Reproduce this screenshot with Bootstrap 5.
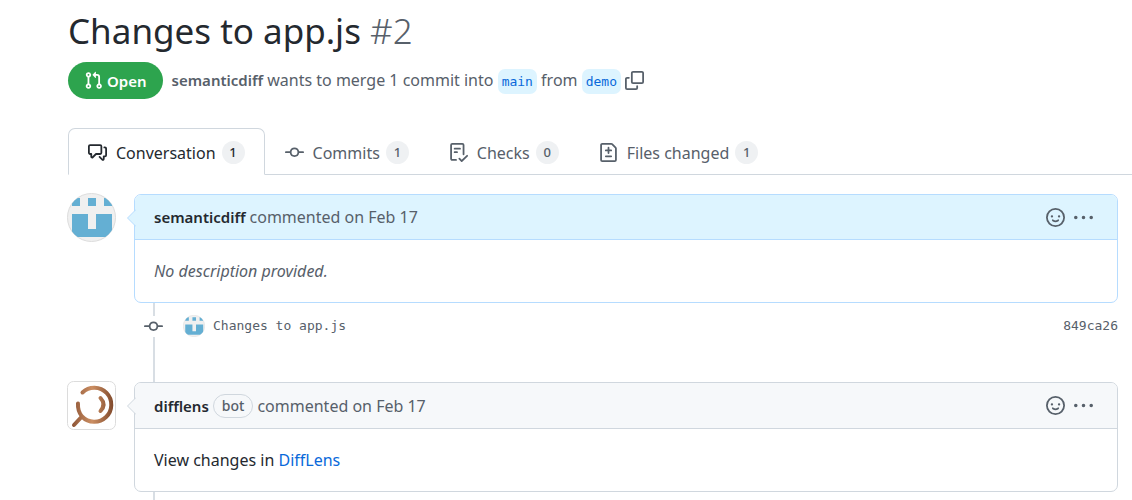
<!DOCTYPE html>
<html lang="en">
<head>
<meta charset="utf-8">
<meta name="viewport" content="width=device-width, initial-scale=1">
<title>Changes to app.js #2</title>
<link rel="stylesheet" href="https://cdn.jsdelivr.net/npm/bootstrap@5.3.0/dist/css/bootstrap.min.css">
<style>
  :root { --ink: #24292f; --muted: #57606a; --line: #d0d7de; --accent: #0969da; --sky: #ddf4ff; --sky-line: #b6dcff; }
  body { font: 16px/24px "Noto Sans", "Open Sans", sans-serif; color: var(--ink); overflow-x: hidden; }
  .page { padding-left: 68px; }
  .muted { color: var(--muted); }
  .semi { font-weight: 600; font-size: 15px; }
  .mono { font-family: "DejaVu Sans Mono", monospace; font-size: 13px; }
  .oct { width: 19px; height: 19px; fill: currentColor; flex: none; display: block; }
  .pr-title { font-size: 35px; line-height: 44px; font-weight: 400; padding-top: 9px; margin-bottom: 9px; }
  .pr-title span { font-weight: 300; color: var(--muted); }
  .state { background: #2da44e; color: #fff; height: 37px; padding: 0 16px; gap: 4px; margin-right: 9px; }
  .branch { background: var(--sky); color: var(--accent); border-radius: 7px; padding: 0 4px; line-height: 25px; display: inline-block; }
  .bare { border: 0; background: none; padding: 0; color: var(--muted); }
  .nav-tabs.pr-tabs { margin-top: 29px; border-color: var(--line); --bs-nav-tabs-border-radius: 7px; }
  .pr-tabs .nav-link { color: var(--muted); padding: 12px 19px 10px; gap: 9px; height: 47px; }
  .pr-tabs .nav-link.active { color: var(--ink); border-color: var(--line) var(--line) #fff; }
  .count { background: #eff1f3; min-width: 23px; height: 23px; line-height: 23px; font-size: 13px; font-weight: 500; text-align: center; border-radius: 12px; margin-left: -3px; }
  .timeline { position: relative; padding: 19px 14px 8px 0; }
  .timeline::before { content: ""; position: absolute; left: 85px; top: 40px; bottom: 0; width: 2px; background: #d8dee4; }
  .entry { gap: 18px; position: relative; }
  .face { width: 49px; height: 49px; flex: none; display: block; margin: -1px 0 0 -1px; }
  .bubble { --edge: var(--line); --fill: #f6f8fa; border: 1px solid var(--edge); border-radius: 7px; background: #fff; position: relative; min-width: 0; }
  .bubble.own { --edge: var(--sky-line); --fill: var(--sky); }
  .bubble-head { background: var(--fill); border-bottom: 1px solid var(--edge); border-radius: 6px 6px 0 0; padding: 0 19px; min-height: 45px; gap: 4px; }
  .bubble-head.tall { min-height: 46px; }
  .bubble-head .actions { gap: 9px; padding-right: 5px; }
  .bubble-text { padding: 19px; }
  .notch { position: absolute; left: -8px; top: 14px; width: 9px; height: 18px; fill: var(--fill); stroke: var(--edge); }
  .bot { border: 1px solid var(--line); border-radius: 12px; padding: 0 8px; line-height: 22px; font-size: 14px; font-weight: 500; }
  .push { padding: 11px 0 44px 76px; position: relative; }
  .push-dot { background: #fff; padding: 1px 0; margin-right: 20px; }
  a.plain { color: inherit; text-decoration: none; }
  a.author { color: var(--ink); }
  a.blue { color: var(--accent); text-decoration: none; }
</style>
</head>
<body>
<svg class="position-absolute" width="0" height="0" xmlns="http://www.w3.org/2000/svg" aria-hidden="true">
  <defs>
    <clipPath id="disc"><circle cx="24.500" cy="24.500" r="24"/></clipPath>
    <linearGradient id="copper" gradientUnits="userSpaceOnUse" x1="4" x2="46" y1="0" y2="0"><stop offset="0" stop-color="#8a5234"/><stop offset=".5" stop-color="#cc8f63"/><stop offset="1" stop-color="#824b2d"/></linearGradient>
  </defs>
  <symbol id="identicon" viewBox="0 0 49 49">
    <circle cx="24.500" cy="24.500" r="24" fill="#f0f0f0" stroke="#dcdcdc"/>
    <path clip-path="url(#disc)" fill="#64afd3" d="M5 5h8v8H5zM21 5h8v8h-8zM37 5h8v8h-8zM5 21h16v15h8V21h16v23H5z"/>
  </symbol>
  <symbol id="commit" viewBox="0 0 16 16"><path fill-rule="evenodd" d="M10.5 7.750a2.500 2.500 0 11-5 0 2.500 2.500 0 015 0zm1.430.750a4.002 4.002 0 01-7.860 0H.75a.75.75 0 110-1.500h3.320a4.001 4.001 0 017.860 0h3.320a.75.75 0 110 1.500h-3.320z"/></symbol>
  <symbol id="smiley" viewBox="0 0 16 16"><path fill-rule="evenodd" d="M1.5 8a6.5 6.5 0 1113 0 6.5 6.5 0 01-13 0zM8 0a8 8 0 100 16A8 8 0 008 0zM5 8a1 1 0 100-2 1 1 0 000 2zm7-1a1 1 0 11-2 0 1 1 0 012 0zM5.320 9.636a.75.75 0 011.038.175l.007.009c.103.118.22.222.35.31.264.178.683.37 1.285.37.602 0 1.020-.192 1.285-.371.13-.088.247-.192.35-.31l.007-.008a.75.75 0 111.222.87c-.2.260-.45.490-.732.680-.474.322-1.180.630-2.132.630-.946 0-1.652-.308-2.126-.63a3.320 3.320 0 01-.737-.685.75.75 0 01.183-1.050z"/></symbol>
  <symbol id="dots" viewBox="0 0 16 16"><path d="M8 9.500a1.500 1.500 0 100-3 1.500 1.500 0 000 3zM1.500 9.500a1.500 1.500 0 100-3 1.500 1.500 0 000 3zm13 0a1.500 1.500 0 100-3 1.500 1.500 0 000 3z"/></symbol>
</svg>

<main class="page">
  <h1 class="pr-title">Changes to app.js <span>#2</span></h1>

  <div class="d-flex flex-wrap align-items-center muted">
    <span class="state d-inline-flex align-items-center rounded-pill semi">
      <svg class="oct" viewBox="0 0 16 16" aria-hidden="true"><path fill-rule="evenodd" d="M7.177 3.073L9.573.677A.25.25 0 0110 .854v4.792a.25.25 0 01-.427.177L7.177 3.427a.25.25 0 010-.354zM3.750 2.500a.75.75 0 100 1.500.75.75 0 000-1.500zm-2.250.750a2.250 2.250 0 113 2.122v5.256a2.251 2.251 0 11-1.500 0V5.372A2.250 2.250 0 011.500 3.250zM11 2.500h-1V4h1a1 1 0 011 1v5.628a2.251 2.251 0 101.500 0V5A2.500 2.500 0 0011 2.500zm1 10.250a.75.75 0 111.500 0 .75.75 0 01-1.500 0zM3.750 12a.75.75 0 100 1.500.75.75 0 000-1.500z"/></svg>
      Open
    </span>
    <span><a class="plain semi" href="#">semanticdiff</a> wants to merge 1 commit into <a class="branch mono text-decoration-none" href="#">main</a> from <a class="branch mono text-decoration-none" href="#">demo</a></span>
    <button class="bare ms-1" type="button" aria-label="Copy branch name">
      <svg class="oct" viewBox="0 0 16 16"><path fill-rule="evenodd" d="M0 6.750C0 5.784.784 5 1.750 5h1.500a.75.75 0 010 1.500h-1.500a.25.25 0 00-.25.25v7.500c0 .138.112.25.25.25h7.500a.25.25 0 00.25-.25v-1.500a.75.75 0 011.500 0v1.500A1.750 1.750 0 019.250 16h-7.500A1.750 1.750 0 010 14.250v-7.500zM5 1.750C5 .784 5.784 0 6.750 0h7.500C15.216 0 16 .784 16 1.750v7.500A1.750 1.750 0 0114.250 11h-7.500A1.750 1.750 0 015 9.250v-7.500zm1.750-.25a.25.25 0 00-.25.25v7.500c0 .138.112.25.25.25h7.500a.25.25 0 00.25-.25v-7.500a.25.25 0 00-.25-.25h-7.500z"/></svg>
    </button>
  </div>

  <ul class="nav nav-tabs pr-tabs">
    <li class="nav-item"><a class="nav-link active d-flex align-items-center" aria-current="page" href="#">
      <svg class="oct" viewBox="0 0 16 16" aria-hidden="true"><path fill-rule="evenodd" d="M1.500 2.750a.25.25 0 01.25-.25h8.500a.25.25 0 01.25.25v5.500a.25.25 0 01-.25.25h-3.500a.75.75 0 00-.53.22L3.500 11.440V9.250a.75.75 0 00-.75-.75h-1a.25.25 0 01-.25-.25v-5.500zM1.750 1A1.750 1.750 0 000 2.750v5.500C0 9.216.784 10 1.750 10H2v1.543a1.457 1.457 0 002.487 1.030L7.061 10h3.189A1.750 1.750 0 0012 8.250v-5.500A1.750 1.750 0 0010.250 1h-8.500zM14.500 4.750a.25.25 0 00-.25-.25h-.5a.75.75 0 110-1.500h.5c.966 0 1.750.784 1.750 1.750v5.500A1.750 1.750 0 0114.250 12H14v1.543a1.457 1.457 0 01-2.487 1.030L9.220 12.280a.75.75 0 111.060-1.060l2.220 2.220v-2.190a.75.75 0 01.75-.75h1a.25.25 0 00.25-.25v-5.500z"/></svg>
      Conversation <span class="count">1</span></a></li>
    <li class="nav-item"><a class="nav-link d-flex align-items-center" href="#">
      <svg class="oct" aria-hidden="true"><use href="#commit"/></svg>
      Commits <span class="count">1</span></a></li>
    <li class="nav-item"><a class="nav-link d-flex align-items-center" href="#">
      <svg class="oct" viewBox="0 0 16 16" aria-hidden="true"><path fill-rule="evenodd" d="M2.500 1.750a.25.25 0 01.25-.25h8.500a.25.25 0 01.25.25v7.736a.75.75 0 101.500 0V1.750A1.750 1.750 0 0011.250 0h-8.500A1.750 1.750 0 001 1.750v11.500c0 .966.784 1.750 1.750 1.750h3.170a.75.75 0 000-1.500H2.750a.25.25 0 01-.25-.25V1.750zM4.750 4a.75.75 0 000 1.500h4.500a.75.75 0 000-1.500h-4.500zM4 7.750A.75.75 0 014.750 7h2a.75.75 0 010 1.500h-2A.75.75 0 014 7.750zm11.774 3.537a.75.75 0 00-1.048-1.074L10.700 14.145 9.281 12.720a.75.75 0 00-1.062 1.058l1.943 1.950a.75.75 0 001.055.008l4.557-4.450z"/></svg>
      Checks <span class="count">0</span></a></li>
    <li class="nav-item"><a class="nav-link d-flex align-items-center" href="#">
      <svg class="oct" viewBox="0 0 16 16" aria-hidden="true"><path fill-rule="evenodd" d="M2.750 1.500a.25.25 0 00-.25.25v12.500c0 .138.112.25.25.25h10.500a.25.25 0 00.25-.25V4.664a.25.25 0 00-.073-.177l-2.914-2.914a.25.25 0 00-.177-.073H2.750zM1 1.750C1 .784 1.784 0 2.750 0h7.586c.464 0 .909.184 1.237.513l2.914 2.914c.329.328.513.773.513 1.237v9.586A1.750 1.750 0 0113.250 16H2.750A1.750 1.750 0 011 14.250V1.750zm7 1.500a.75.75 0 01.75.75v1.500h1.500a.75.75 0 010 1.500h-1.500v1.500a.75.75 0 01-1.500 0V7h-1.500a.75.75 0 010-1.500h1.500V4A.75.75 0 018 3.250zm-3 8a.75.75 0 01.75-.75h4.500a.75.75 0 010 1.500h-4.500a.75.75 0 01-.75-.75z"/></svg>
      Files changed <span class="count">1</span></a></li>
  </ul>

  <section class="timeline">
    <article class="entry d-flex align-items-start">
      <svg class="face" role="img" aria-label="semanticdiff"><use href="#identicon"/></svg>
      <div class="bubble own flex-grow-1">
        <svg class="notch" viewBox="0 0 9 18" aria-hidden="true"><path d="M9 .5L.5 9 9 17.500"/></svg>
        <div class="bubble-head d-flex align-items-center muted">
          <a class="plain semi author" href="#">semanticdiff</a> <span>commented on Feb 17</span>
          <div class="actions d-flex ms-auto">
            <button class="bare" type="button" aria-label="Add reaction"><svg class="oct"><use href="#smiley"/></svg></button>
            <button class="bare" type="button" aria-label="More options"><svg class="oct"><use href="#dots"/></svg></button>
          </div>
        </div>
        <div class="bubble-text muted fst-italic">No description provided.</div>
      </div>
    </article>

    <div class="push d-flex align-items-center mono muted">
      <span class="push-dot"><svg class="oct"><use href="#commit"/></svg></span>
      <svg class="me-2" width="22" height="22" role="img" aria-label="semanticdiff"><use href="#identicon"/></svg>
      <a class="plain" href="#">Changes to app.js</a>
      <a class="plain ms-auto" href="#">849ca26</a>
    </div>

    <article class="entry d-flex align-items-start">
      <svg class="face" viewBox="0 0 49 49" role="img" aria-label="difflens">
        <rect x=".5" y=".5" width="48" height="48" rx="6" fill="#fff" stroke="#dcdcdc"/>
        <g fill="none" stroke="url(#copper)" stroke-width="4" stroke-linecap="round">
          <path d="M15.500 11.500A17 17 0 1 1 15 35.500L7 44M15 35.500Q10.500 30 11 22.500M33.500 17q6 6.500 0 13"/>
        </g>
      </svg>
      <div class="bubble flex-grow-1">
        <svg class="notch" viewBox="0 0 9 18" aria-hidden="true"><path d="M9 .5L.5 9 9 17.500"/></svg>
        <div class="bubble-head tall d-flex align-items-center muted">
          <a class="plain semi author" href="#">difflens</a> <span class="bot">bot</span> <span>commented on Feb 17</span>
          <div class="actions d-flex ms-auto">
            <button class="bare" type="button" aria-label="Add reaction"><svg class="oct"><use href="#smiley"/></svg></button>
            <button class="bare" type="button" aria-label="More options"><svg class="oct"><use href="#dots"/></svg></button>
          </div>
        </div>
        <div class="bubble-text">View changes in <a class="blue" href="#">DiffLens</a></div>
      </div>
    </article>
  </section>
</main>
<script src="https://cdn.jsdelivr.net/npm/bootstrap@5.3.0/dist/js/bootstrap.bundle.min.js"></script>
</body>
</html>
